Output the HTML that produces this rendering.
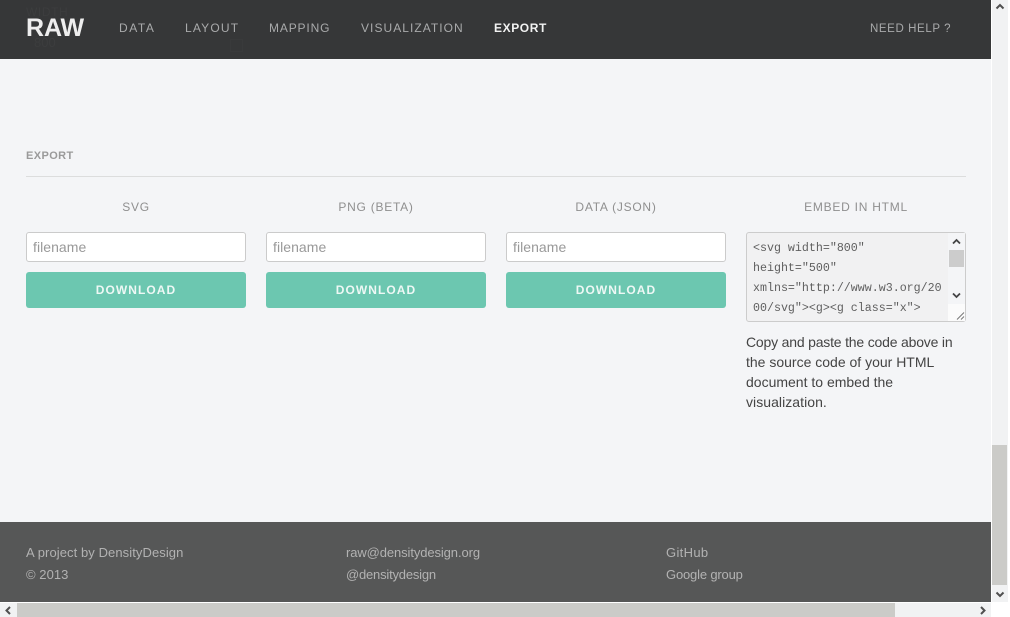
<!DOCTYPE html>
<html><head><meta charset="utf-8">
<style>
html,body{margin:0;padding:0;width:1010px;height:617px;overflow:hidden;background:#fff;font-family:"Liberation Sans",sans-serif}
.a{position:absolute;white-space:nowrap}
#page{position:absolute;left:0;top:0;width:991px;height:602px;background:#f4f5f7;overflow:hidden}
.nav{top:20px;font-size:12px;line-height:16px;color:#a9aaab;letter-spacing:1px}
.h{top:199px;width:220px;text-align:center;font-size:12px;line-height:16px;color:#8f8f8f;letter-spacing:.75px}
.in{top:232px;width:218px;height:28px;border:1px solid #cbcbcb;border-radius:3px;background:#fff;font-size:14px;line-height:28px;color:#999;text-indent:6px;letter-spacing:.05px}
.btn{top:272px;width:220px;height:36px;border-radius:3px;background:#6cc7b0;color:#eef8f5;text-align:center;font-size:12px;font-weight:bold;line-height:36px;letter-spacing:1.05px}
.f{font-size:13px;line-height:18px;color:#b2b2b2}
.p{left:746px;font-size:14px;line-height:20px;color:#444}
.m{left:753px;font-family:"Liberation Mono",monospace;font-size:11.65px;line-height:20px;color:#5f5f5f}
svg{position:absolute;overflow:visible}
</style></head><body>
<div id="page">
<div class="a" style="left:0;top:0;width:991px;height:59px;background:#363738"></div>
<div class="a" style="left:26px;top:5px;font-size:12px;line-height:14px;color:#3c3d3e;letter-spacing:.6px">WIDTH</div>
<div class="a" style="left:34px;top:36px;font-size:13px;line-height:14px;color:#3c3d3e">800</div>
<div class="a" style="left:230px;top:39px;width:13px;height:13px;border:1px solid #393a3b;box-sizing:border-box"></div>
<div class="a" style="left:26px;top:13px;font-size:25px;line-height:30px;font-weight:bold;color:#eeeeee;letter-spacing:-.1px">RAW</div>
<div class="a nav" style="left:119px;letter-spacing:1.55px">DATA</div>
<div class="a nav" style="left:185px;letter-spacing:1.2px">LAYOUT</div>
<div class="a nav" style="left:269px;letter-spacing:.85px">MAPPING</div>
<div class="a nav" style="left:361px;letter-spacing:1.05px">VISUALIZATION</div>
<div class="a nav" style="left:494px;color:#f2f2f2;font-weight:bold;letter-spacing:.6px">EXPORT</div>
<div class="a nav" style="left:870px;top:21px;font-size:11.5px;letter-spacing:.6px">NEED HELP ?</div>

<div class="a" style="left:26px;top:148px;font-size:11px;line-height:16px;font-weight:bold;color:#9a9a9a;letter-spacing:.4px">EXPORT</div>
<div class="a" style="left:26px;top:176px;width:940px;height:1px;background:#dcdddd"></div>

<div class="a h" style="left:26px">SVG</div>
<div class="a h" style="left:266px">PNG (BETA)</div>
<div class="a h" style="left:506px">DATA (JSON)</div>
<div class="a h" style="left:746px">EMBED IN HTML</div>

<div class="a in" style="left:26px">filename</div>
<div class="a in" style="left:266px">filename</div>
<div class="a in" style="left:506px">filename</div>
<div class="a btn" style="left:26px">DOWNLOAD</div>
<div class="a btn" style="left:266px">DOWNLOAD</div>
<div class="a btn" style="left:506px">DOWNLOAD</div>

<div class="a" style="left:746px;top:232px;width:218px;height:88px;border:1px solid #cccccc;border-radius:3px;background:#f1f1f2"></div>
<div class="a m" style="top:239px">&lt;svg width="800"</div>
<div class="a m" style="top:259px">height="500"</div>
<div class="a m" style="top:279px">xmlns="http://www.w3.org/20</div>
<div class="a m" style="top:299px">00/svg"&gt;&lt;g&gt;&lt;g class="x"&gt;</div>
<div class="a" style="left:948px;top:233px;width:17px;height:88px;background:#f4f5f7"></div>
<div class="a" style="left:949px;top:250px;width:15px;height:17px;background:#cccccc"></div>
<div class="a" style="left:948px;top:304px;width:17px;height:17px;background:#fbfbfb"></div>
<svg style="left:0;top:0" width="991" height="602">
<path d="M953 243.5l3.5-3.5 3.5 3.5" fill="none" stroke="#444" stroke-width="1.8"/>
<path d="M953 293.5l3.5 3.5 3.5-3.5" fill="none" stroke="#444" stroke-width="1.8"/>
<path d="M957 319.5l7-7M961 319.5l3-3" fill="none" stroke="#777" stroke-width="1"/>
</svg>

<div class="a p" style="top:332px;letter-spacing:-.19px">Copy and paste the code above in</div>
<div class="a p" style="top:352px">the source code of your HTML</div>
<div class="a p" style="top:372px">document to embed the</div>
<div class="a p" style="top:392px;letter-spacing:.05px">visualization.</div>

<div class="a" style="left:0;top:522px;width:991px;height:80px;background:#565757"></div>
<div class="a f" style="left:26px;top:544px;letter-spacing:.08px">A project by DensityDesign</div>
<div class="a f" style="left:26px;top:566px;letter-spacing:.05px">© 2013</div>
<div class="a f" style="left:346px;top:544px;letter-spacing:-.1px">raw@densitydesign.org</div>
<div class="a f" style="left:346px;top:566px;letter-spacing:-.2px">@densitydesign</div>
<div class="a f" style="left:666px;top:544px;letter-spacing:.33px">GitHub</div>
<div class="a f" style="left:666px;top:566px;letter-spacing:-.17px">Google group</div>
</div>

<div class="a" style="left:992px;top:0;width:16px;height:602px;background:#f1f2f3"></div>
<div class="a" style="left:992px;top:445px;width:15px;height:140px;background:#cbcbc8"></div>
<div class="a" style="left:0;top:603px;width:991px;height:14px;background:#f1f2f3"></div>
<div class="a" style="left:17px;top:603px;width:878px;height:14px;background:#cbcbc8"></div>
<svg style="left:0;top:0" width="1010" height="617">
<path d="M996.5 8.5l3.5-3.5 3.5 3.5" fill="none" stroke="#505050" stroke-width="2"/>
<path d="M996.5 592.5l3.5 3.5 3.5-3.5" fill="none" stroke="#505050" stroke-width="2"/>
<path d="M10 607l-3.5 3.5 3.5 3.5" fill="none" stroke="#505050" stroke-width="2"/>
<path d="M981 607l3.5 3.5-3.5 3.5" fill="none" stroke="#505050" stroke-width="2"/>
</svg>
</body></html>
